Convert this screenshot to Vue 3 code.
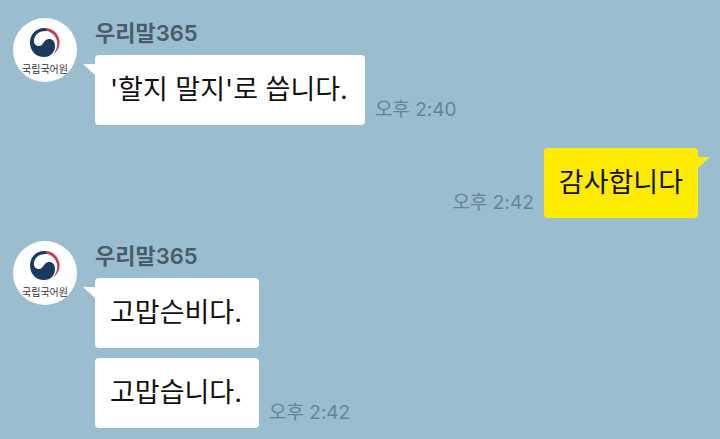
<template>
  <main class="chat">
    <section
      v-for="(group, index) in groups"
      :key="index"
      :class="['group', { mine: group.mine }]"
    >
      <div v-if="!group.mine" class="avatar">
        <svg class="emblem" viewBox="0 0 32 32" aria-hidden="true">
          <path
            fill="#c93b54"
            d="M9 3 C18 -2 29 3 30.500 14 C31 20 28 25 24 27.500 C27 24 29 19 28 14 C26 6 18 2 9 3 Z"
          />
          <path
            fill="#173a5e"
            d="M15 1 C6 1.500 1 8 1 15.500 C1 24 7 30 15 30 C22 30 26 25 26 19 C26 14 23 11.500 19.500 12 C14.500 12.500 14.500 19 10 19 C6 19 4.500 16 5 12.500 C6 7 11 3.500 18 4 C17.500 2.500 16.500 1.500 15 1 Z"
          />
        </svg>
        <span class="avatar-label">국립국어원</span>
      </div>
      <div class="content">
        <h2 v-if="!group.mine" class="name">{{ group.name }}</h2>
        <div v-for="(message, i) in group.messages" :key="i" class="line">
          <p :class="['bubble', { tail: i === 0 }]">{{ message.text }}</p>
          <time v-if="message.time" class="time">오후 {{ message.time }}</time>
        </div>
      </div>
    </section>
  </main>
</template>

<script setup>
const groups = [
  {
    name: '우리말365',
    messages: [{ text: "'할지 말지'로 씁니다.", time: '2:40' }]
  },
  {
    mine: true,
    messages: [{ text: '감사합니다', time: '2:42' }]
  },
  {
    name: '우리말365',
    messages: [
      { text: '고맙슨비다.' },
      { text: '고맙습니다.', time: '2:42' }
    ]
  }
]
</script>

<style>
body {
  margin: 0;
  background: #9bbdd0;
}
</style>

<style scoped>
.chat {
  display: flex;
  flex-direction: column;
  gap: 23px;
  padding: 18px 22px 11px 13px;
  font-family: Inter, "Noto Sans CJK KR", sans-serif;
}

.group {
  display: flex;
  gap: 18px;
}

.group.mine {
  justify-content: flex-end;
}

/* 프로필 이미지 */
.avatar {
  display: flex;
  flex: none;
  flex-direction: column;
  align-items: center;
  box-sizing: border-box;
  width: 64px;
  height: 64px;
  padding-top: 9px;
  border-radius: 50%;
  background: #fff;
}

.emblem {
  width: 32px;
  height: 32px;
}

.avatar-label {
  font-size: 10px;
  line-height: 20px;
  color: #333;
  white-space: nowrap;
}

.content {
  display: flex;
  flex-direction: column;
  gap: 10px;
}

.name {
  margin: 0 0 -3px;
  font-size: 22px;
  font-weight: 600;
  line-height: 30px;
  color: #485d69;
}

.line {
  display: flex;
  align-items: flex-end;
  gap: 10px;
}

.mine .line {
  flex-direction: row-reverse;
}

/* 말풍선 */
.bubble {
  position: relative;
  margin: 0;
  padding: 15px 17px 15px 15px;
  border-radius: 4px;
  background: #fff;
  font-size: 27px;
  line-height: 40px;
  color: #111;
}

.mine .bubble {
  padding: 15px;
  background: #ffeb00;
}

.bubble.tail::before {
  content: "";
  position: absolute;
  top: 9px;
  left: -12px;
  width: 13px;
  height: 12px;
  background: inherit;
  clip-path: polygon(0 0, 100% 0, 100% 100%);
}

.mine .bubble.tail::before {
  right: -12px;
  left: auto;
  clip-path: polygon(0 0, 100% 0, 0 100%);
}

.time {
  padding-bottom: 3px;
  font-size: 19px;
  line-height: 24px;
  color: #668496;
  white-space: nowrap;
}
</style>
